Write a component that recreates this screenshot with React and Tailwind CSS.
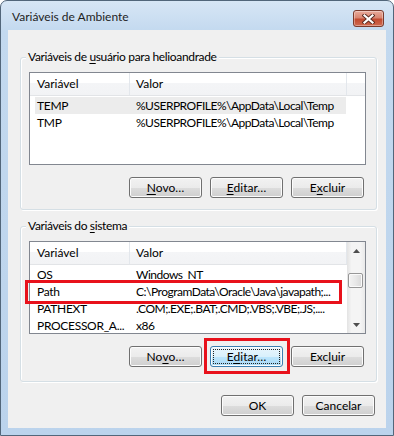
import React from 'react'

const btnBase =
  'h-[21px] w-[73px] rounded-[3px] border text-[12px] leading-none text-black flex items-center justify-center shadow-[inset_0_0_0_1px_#fcfcfc]'
const btnNormal =
  'border-[#707070] bg-[linear-gradient(to_bottom,#f2f2f2_0%,#ebebeb_50%,#dddddd_50%,#cfcfcf_100%)]'
const btnFocused =
  'border-[#3c7fb1] bg-[linear-gradient(to_bottom,#eaf6fd_0%,#d9f0fc_50%,#bee6fd_50%,#a7d9f5_100%)] p-[2px]'

function Button({ children, focused }) {
  if (focused) {
    return (
      <button className={`${btnBase} ${btnFocused}`}>
        <span className="w-full h-full flex items-center justify-center border border-dotted border-[#222]">
          {children}
        </span>
      </button>
    )
  }
  return <button className={`${btnBase} ${btnNormal}`}>{children}</button>
}

function U({ children }) {
  return <span className="underline underline-offset-[2px]">{children}</span>
}

function CloseButton() {
  return (
    <div className="mt-[9px] mr-[9px] w-[31px] h-[17px] rounded-[3px] border border-[#7a3a2c] bg-[linear-gradient(to_bottom,#e9ab9c_0%,#d98571_45%,#c24a30_55%,#cf6a4f_100%)] shadow-[inset_0_0_0_1px_rgba(255,255,255,0.35)] flex items-center justify-center">
      <svg width="13" height="10" viewBox="0 0 13 10">
        <path d="M2.5 1.5 L10.5 8.5 M10.5 1.5 L2.5 8.5" stroke="#5a2a20" strokeWidth="4" strokeLinecap="square" />
        <path d="M2.5 1.5 L10.5 8.5 M10.5 1.5 L2.5 8.5" stroke="#ffffff" strokeWidth="2.2" strokeLinecap="square" />
      </svg>
    </div>
  )
}

function Group({ label, className, children }) {
  return (
    <div
      className={`relative rounded-[3px] border border-[#d5dfe5] shadow-[inset_1px_1px_0_#ffffff,1px_1px_0_#ffffff] ${className}`}
    >
      <span className="absolute -top-[9px] left-[5px] px-[2px] bg-[#f0f0f0] leading-[16px] text-black tracking-[-0.35px]">
        {label}
      </span>
      {children}
    </div>
  )
}

function Arrow({ up }) {
  return (
    <svg width="7" height="4" viewBox="0 0 7 4">
      <path d={up ? 'M0 4 L3.5 0 L7 4 Z' : 'M0 0 L3.5 4 L7 0 Z'} fill="#4e4e4e" />
    </svg>
  )
}

function Scrollbar() {
  return (
    <div className="w-[18px] h-full flex flex-col bg-[linear-gradient(to_right,#e3e3e3_0%,#f4f4f4_25%,#f4f4f4_75%,#e9e9e9_100%)]">
      <div className="h-[17px] flex items-center justify-center">
        <Arrow up />
      </div>
      <div className="flex-1">
        <div className="mt-[14px] ml-[1px] w-[15px] h-[15px] rounded-[2px] border border-[#979797] bg-[linear-gradient(to_right,#f3f3f3_0%,#e8e8e8_50%,#d8d8d8_100%)] shadow-[inset_0_0_0_1px_#fafafa]" />
      </div>
      <div className="h-[17px] flex items-center justify-center">
        <Arrow />
      </div>
    </div>
  )
}

function ListView({ rows, selected, scrollbar }) {
  return (
    <div className="w-[337px] h-[93px] border border-[#828790] bg-white flex overflow-hidden">
      <div className="flex-1 min-w-0 flex flex-col">
        <div className="h-[23px] shrink-0 flex border-b border-[#e2e4e7] bg-[linear-gradient(to_bottom,#ffffff_0%,#ffffff_45%,#f4f5f7_45%,#f2f3f5_100%)]">
          <div className="w-[100px] border-r border-[#e3e7ec] pl-[7px] flex items-center">Variável</div>
          <div className="w-[217px] border-r border-[#e3e7ec] pl-[6px] flex items-center">Valor</div>
          <div className="flex-1" />
        </div>
        <div className="mt-[1px] flex flex-col">
          {rows.map(([name, value], i) => (
            <div
              key={name}
              className={`ml-[5px] w-[311px] h-[17px] shrink-0 flex items-center pt-[1px] ${i === selected ? 'bg-[#ececec]' : ''}`}
            >
              <div className="w-[99px] pl-[2px] whitespace-nowrap overflow-hidden tracking-[-0.3px]">{name}</div>
              <div className="flex-1 pl-[2px] whitespace-nowrap overflow-hidden tracking-[-0.5px]">{value}</div>
            </div>
          ))}
        </div>
      </div>
      {scrollbar && <Scrollbar />}
    </div>
  )
}

const userVars = [
  ['TEMP', '%USERPROFILE%\\AppData\\Local\\Temp'],
  ['TMP', '%USERPROFILE%\\AppData\\Local\\Temp'],
]

const systemVars = [
  ['OS', 'Windows_NT'],
  ['Path', 'C:\\ProgramData\\Oracle\\Java\\javapath;...'],
  ['PATHEXT', '.COM;.EXE;.BAT;.CMD;.VBS;.VBE;.JS;....'],
  ['PROCESSOR_A...', 'x86'],
]

export default function App() {
  return (
    <div className="w-[394px] h-[436px] bg-white font-['Lato','Segoe_UI',sans-serif] text-[12px] text-black">
      <div className="relative w-full h-full flex flex-col rounded-t-[7px] border border-[#52667a] bg-[linear-gradient(to_bottom,#d7e6f5_0px,#c3d9ef_30px,#bbd3ec_100%)]">
        <div className="h-[29px] shrink-0 flex items-start justify-between">
          <span className="mt-[8px] ml-[11px] leading-[16px] text-[#1e1e1e]">Variáveis de Ambiente</span>
          <CloseButton />
        </div>

        <div className="mx-[7px] mb-[7px] flex-1 bg-[#f0f0f0] flex flex-col">
          <Group
            label={
              <>
                Variáveis de <U>u</U>suário para helioandrade
              </>
            }
            className="mt-[27px] ml-[12px] mr-[9px] pt-[14px] pl-[8px] pr-[10px] pb-[11px]"
          >
            <ListView rows={userVars} selected={0} />
            <div className="mt-[12px] mr-[2px] flex justify-end gap-[8px]">
              <Button><U>N</U>ovo…</Button>
              <Button><U>E</U>ditar…</Button>
              <Button>E<U>x</U>cluir</Button>
            </div>
          </Group>

          <Group
            label={
              <>
                Variáveis do <U>s</U>istema
              </>
            }
            className="mt-[16px] ml-[12px] mr-[9px] pt-[14px] pl-[8px] pr-[10px] pb-[14px]"
          >
            <ListView rows={systemVars} scrollbar />
            <div className="mt-[12px] mr-[2px] flex justify-end gap-[8px]">
              <Button>No<U>v</U>o…</Button>
              <Button focused>E<U>d</U>itar…</Button>
              <Button>Exc<U>l</U>uir</Button>
            </div>
          </Group>

          <div className="mt-[13px] pr-[11px] flex justify-end gap-[8px]">
            <Button>OK</Button>
            <Button>Cancelar</Button>
          </div>
        </div>

        <div className="absolute left-[24px] top-[279px] w-[317px] h-[24px] border-[3px] border-[#e8111b]" />
        <div className="absolute left-[203px] top-[337px] w-[86px] h-[36px] border-[3px] border-[#e8111b]" />
      </div>
    </div>
  )
}
